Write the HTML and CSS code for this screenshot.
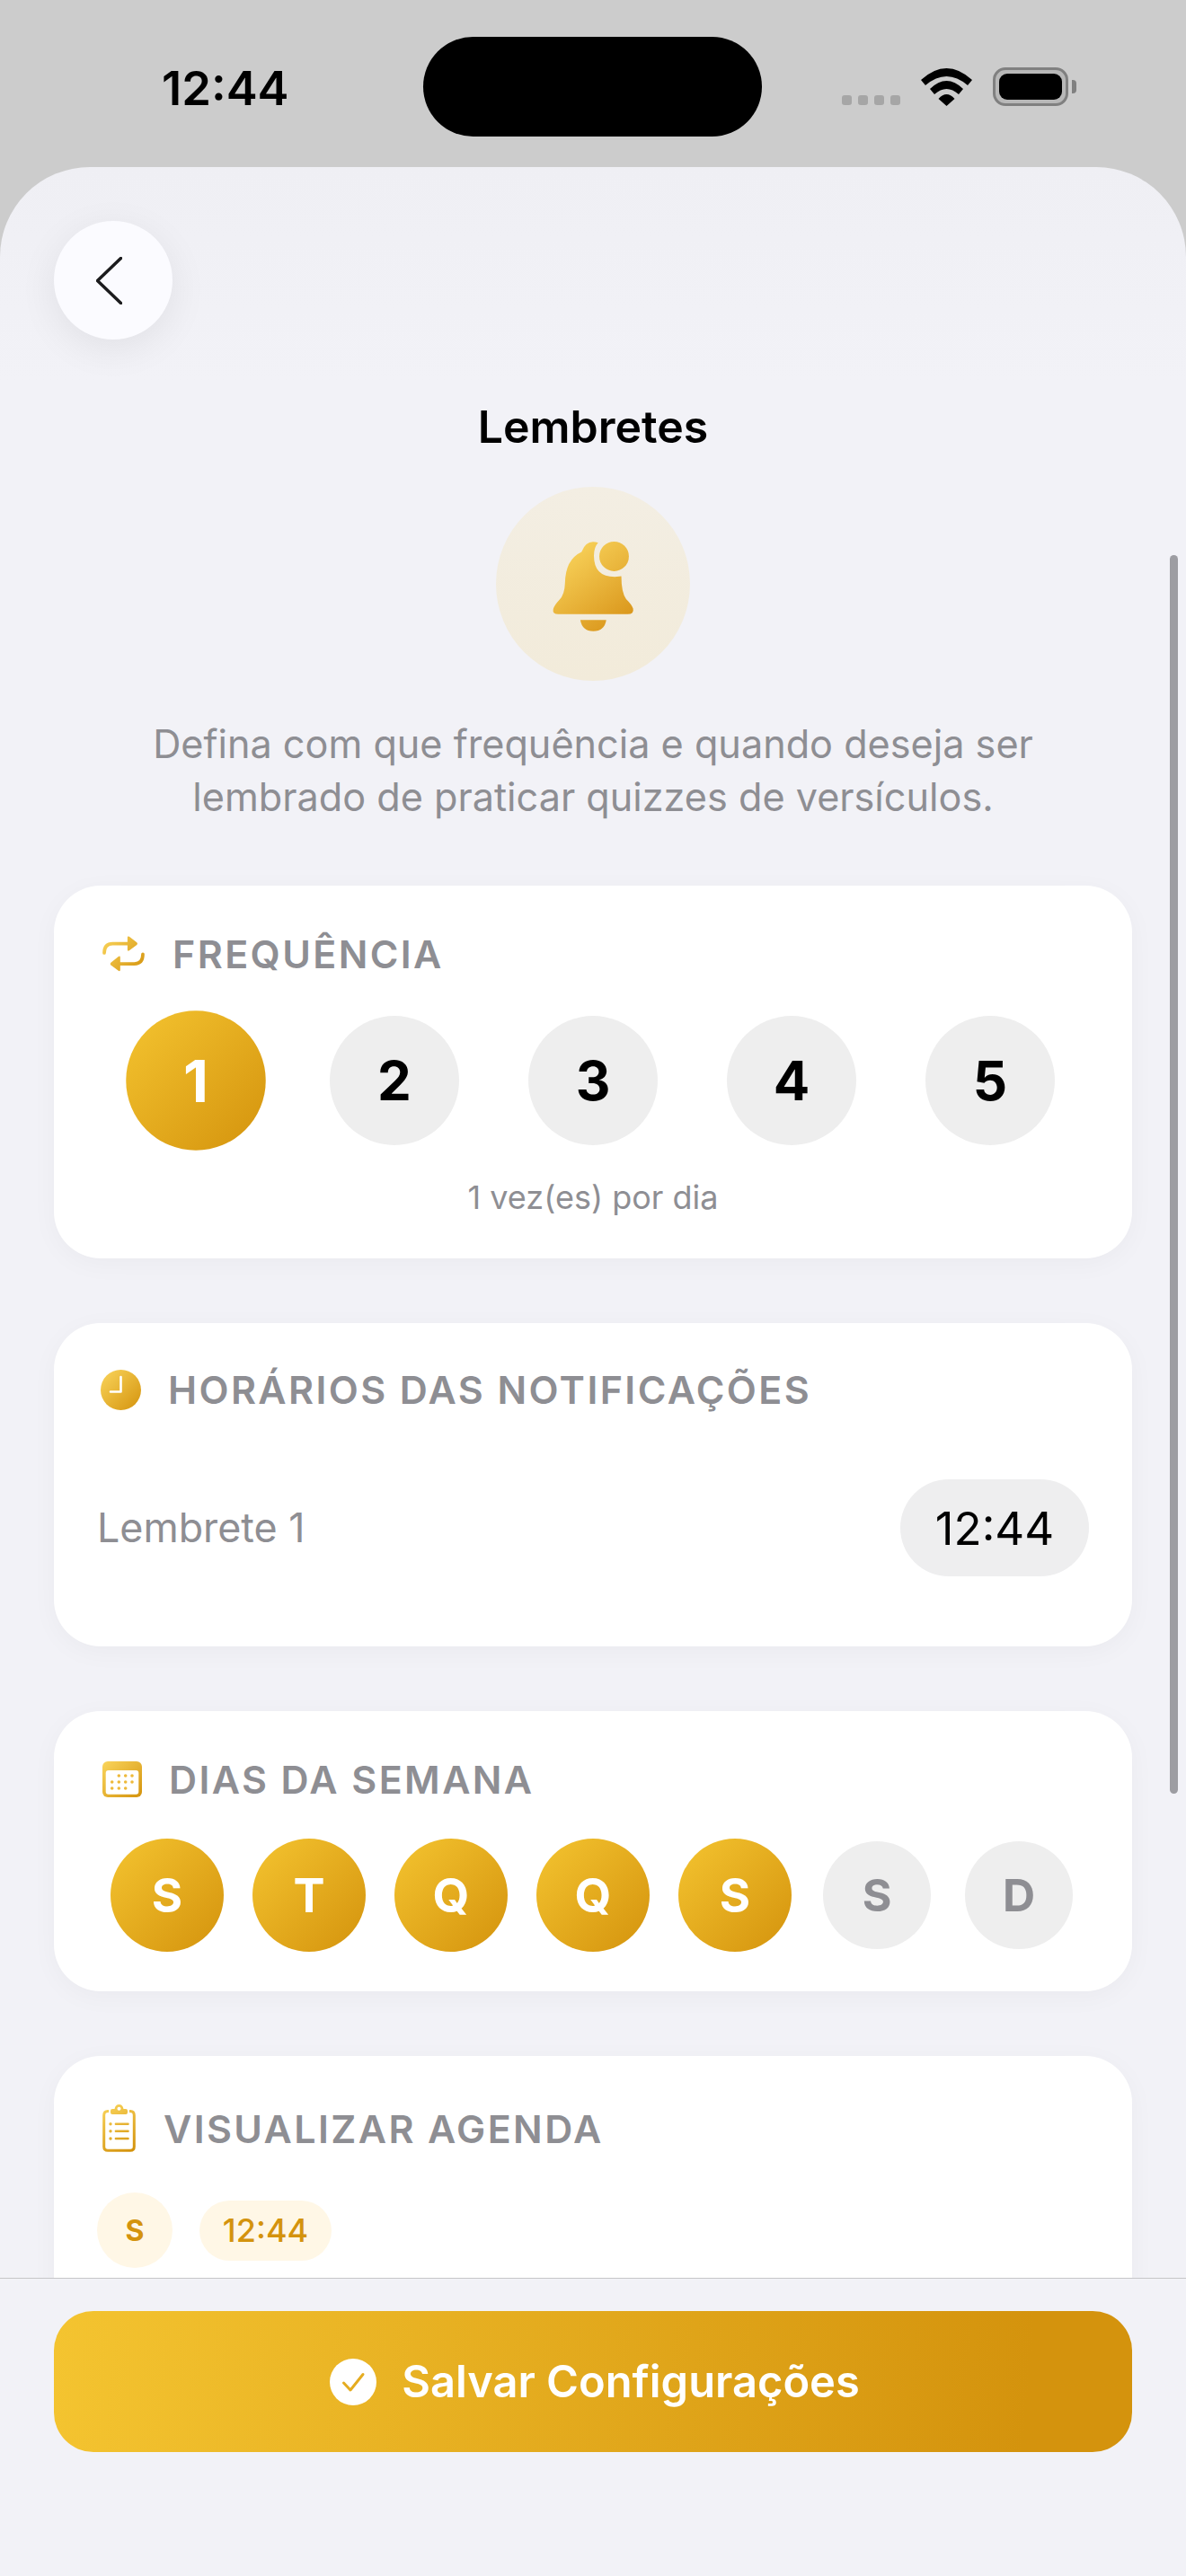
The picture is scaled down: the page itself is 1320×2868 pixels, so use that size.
FILE: index.html
```html
<!DOCTYPE html>
<html lang="pt-BR">
<head>
    <meta charset="UTF-8">
    <meta name="viewport" content="width=device-width, initial-scale=1.0">
    <title>Lembretes</title>
    <link rel="stylesheet" href="styles.css">
</head>
<body>
    <svg class="defs" width="0" height="0">
        <defs>
            <linearGradient id="gold" x1="0" y1="0" x2="1" y2="1">
                <stop offset="0" stop-color="#fad55c"/>
                <stop offset="1" stop-color="#d4930d"/>
            </linearGradient>
            <linearGradient id="goldBell" gradientUnits="userSpaceOnUse" x1="450" y1="340" x2="640" y2="590">
                <stop offset="0" stop-color="#f8d25a"/>
                <stop offset="1" stop-color="#d9951a"/>
            </linearGradient>
            <linearGradient id="goldRepeat" gradientUnits="userSpaceOnUse" x1="222" y1="185" x2="362" y2="303">
                <stop offset="0" stop-color="#fad55c"/>
                <stop offset="1" stop-color="#d4930d"/>
            </linearGradient>
            <linearGradient id="goldClip" gradientUnits="userSpaceOnUse" x1="0" y1="0" x2="30" y2="53">
                <stop offset="0" stop-color="#fad55c"/>
                <stop offset="1" stop-color="#d4930d"/>
            </linearGradient>
        </defs>
    </svg>

    <div class="status-bar">
        <span class="clock">12:44</span>
        <div class="island"></div>
        <div class="status-icons">
            <div class="signal"><i></i><i></i><i></i><i></i></div>
            <svg class="wifi" width="57" height="42" viewBox="0 0 57 42">
                <path d="M0 13Q28.5 -13 57 13L52 19Q28.5 -1 5 19Z"/>
                <path d="M10 23Q28.5 5 47 23L42 29Q28.5 17 15 29Z"/>
                <path d="M19.5 34Q28.5 24 37.5 34L28.5 42Z"/>
            </svg>
            <div class="battery"><div class="battery-fill"></div></div>
            <div class="battery-nub"></div>
        </div>
    </div>

    <div class="sheet">
        <div class="back-btn">
            <svg width="29" height="53" viewBox="0 0 29 53">
                <path d="M27.5 1.5L1.5 26.5L27.5 51.5" fill="none" stroke="#1c1c1e" stroke-width="3.5" stroke-linecap="round" stroke-linejoin="round"/>
            </svg>
        </div>
        <div class="scrollbar"></div>

        <div class="scroll">
            <h1 class="title">Lembretes</h1>
            <div class="hero-icon">
                <svg width="94" height="104" viewBox="400 305 280 310">
                    <path fill="url(#goldBell)" d="M425 552Q405 552 408 535Q412 522 428 505Q446 486 447 450Q448 370 502 345Q515 312 540 312Q549 312 557 315Q543 330 543 358Q543 428 612 428L634 426Q634 480 650 502Q668 520 673 533Q677 552 655 552Z"/>
                    <path fill="url(#goldBell)" d="M498 571H584Q578 608 541 608Q504 608 498 571Z"/>
                    <circle fill="url(#goldBell)" cx="610" cy="360" r="49"/>
                </svg>
            </div>
            <p class="intro">Defina com que frequência e quando deseja ser lembrado de praticar quizzes de versículos.</p>

            <section class="card card-freq">
                <div class="card-head">
                    <svg class="head-icon" width="47" height="40" viewBox="222 185 140 118">
                        <g fill="none" stroke="url(#goldRepeat)" stroke-width="11" stroke-linecap="round">
                            <path d="M228 241Q228 210 256 210H315"/>
                            <path d="M356 245Q356 277 328 277H270"/>
                        </g>
                        <path fill="url(#goldRepeat)" d="M305 190Q305 183 311 187L336 206Q340 210 336 214L311 233Q305 237 305 230Z"/>
                        <path fill="url(#goldRepeat)" d="M281 256Q281 249 275 253L250 273Q246 277 250 281L275 300Q281 304 281 297Z"/>
                    </svg>
                    <h2>FREQUÊNCIA</h2>
                </div>
                <div class="freq-row">
                    <div class="freq on">1</div>
                    <div class="freq">2</div>
                    <div class="freq">3</div>
                    <div class="freq">4</div>
                    <div class="freq">5</div>
                </div>
                <p class="freq-note">1 vez(es) por dia</p>
            </section>

            <section class="card card-times">
                <div class="card-head">
                    <svg class="head-icon" width="45" height="45" viewBox="0 0 45 45">
                        <circle cx="22.5" cy="22.5" r="22.5" fill="url(#gold)"/>
                        <path d="M22.5 8V24.5H11" fill="none" stroke="#fff" stroke-width="2.6" stroke-linecap="round" stroke-linejoin="round"/>
                    </svg>
                    <h2>HORÁRIOS DAS NOTIFICAÇÕES</h2>
                </div>
                <div class="time-row">
                    <span class="time-label">Lembrete 1</span>
                    <span class="time-pill">12:44</span>
                </div>
            </section>

            <section class="card card-days">
                <div class="card-head">
                    <svg class="head-icon" width="44" height="40" viewBox="0 0 44 40">
                        <rect width="44" height="40" rx="6" fill="url(#gold)"/>
                        <rect x="3.7" y="10" width="36.6" height="26.7" rx="3" fill="#fff"/>
                        <g fill="#eeb93a">
                            <circle cx="18.3" cy="16" r="1.8"/><circle cx="25.7" cy="16" r="1.8"/><circle cx="33" cy="16" r="1.8"/>
                            <circle cx="10.7" cy="23" r="1.8"/><circle cx="18.3" cy="23" r="1.8"/><circle cx="25.7" cy="23" r="1.8"/><circle cx="33" cy="23" r="1.8"/>
                            <circle cx="10.7" cy="30" r="1.8"/><circle cx="18.3" cy="30" r="1.8"/><circle cx="25.7" cy="30" r="1.8"/>
                        </g>
                    </svg>
                    <h2>DIAS DA SEMANA</h2>
                </div>
                <div class="day-row">
                    <div class="day on">S</div>
                    <div class="day on">T</div>
                    <div class="day on">Q</div>
                    <div class="day on">Q</div>
                    <div class="day on">S</div>
                    <div class="day">S</div>
                    <div class="day">D</div>
                </div>
            </section>

            <section class="card card-agenda">
                <div class="card-head">
                    <svg class="head-icon" width="37" height="53" viewBox="0 0 37 53">
                        <path d="M7 7.5H6Q1.7 7.5 1.7 12V47Q1.7 51.3 6 51.3H31Q35.3 51.3 35.3 47V12Q35.3 7.5 31 7.5H30" fill="none" stroke="url(#goldClip)" stroke-width="3"/>
                        <path fill="url(#goldClip)" fill-rule="evenodd" d="M11 5H13.5Q14.5 0 18.5 0T23.5 5H26Q28 5 28 7V9Q28 11 26 11H11Q9 11 9 9V7Q9 5 11 5ZM18.5 2.8a2 2 0 1 0 .01 0Z"/>
                        <g fill="url(#goldClip)">
                            <circle cx="9" cy="21.7" r="1.7"/><circle cx="9" cy="29.7" r="1.7"/><circle cx="9" cy="38" r="1.7"/>
                            <rect x="13.7" y="20.5" width="16" height="2.4" rx="1"/>
                            <rect x="13.7" y="28.5" width="16" height="2.4" rx="1"/>
                            <rect x="13.7" y="36.8" width="16" height="2.4" rx="1"/>
                        </g>
                    </svg>
                    <h2>VISUALIZAR AGENDA</h2>
                </div>
                <div class="agenda-row">
                    <div class="agenda-day">S</div>
                    <div class="agenda-time">12:44</div>
                </div>
            </section>
        </div>

        <div class="footer">
            <div class="save-btn">
                <svg width="52" height="52" viewBox="0 0 52 52">
                    <circle cx="26" cy="26" r="26" fill="#fff"/>
                    <path d="M15.5 27L23 35L37 17.5" fill="none" stroke="#e5ac20" stroke-width="3" stroke-linecap="round" stroke-linejoin="round"/>
                </svg>
                <span>Salvar Configurações</span>
            </div>
        </div>
    </div>
</body>
</html>
```

FILE: styles.css
```css
* {
    box-sizing: border-box;
}
html, body {
    margin: 0;
    height: 100%;
}
body {
    width: 1320px;
    height: 2868px;
    overflow: hidden;
    display: flex;
    flex-direction: column;
    background: #cccccc;
    font-family: Inter, "Liberation Sans", sans-serif;
    color: #000;
}
.defs {
    position: absolute;
}

/* status bar */
.status-bar {
    height: 186px;
    flex: none;
    display: flex;
    align-items: flex-start;
}
.clock {
    width: 139px;
    margin: 69px 0 0 180px;
    font-size: 52.5px;
    line-height: 58px;
    font-weight: 600;
    white-space: nowrap;
}
.island {
    width: 377px;
    height: 111px;
    margin: 41px 0 0 152px;
    border-radius: 56px;
    background: #000;
}
.status-icons {
    display: flex;
    align-items: flex-end;
    margin: 75px 0 0 89px;
}
.signal {
    display: flex;
    gap: 7px;
    margin-bottom: 1px;
}
.signal i {
    width: 11px;
    height: 11px;
    border-radius: 3px;
    background: #a6a6a6;
}
.wifi {
    margin-left: 23px;
    fill: #000;
}
.battery {
    width: 84px;
    height: 43px;
    margin-left: 23px;
    padding: 4px;
    border: 3px solid #808080;
    border-radius: 14px;
    background: #b8b8b8;
}
.battery-fill {
    height: 100%;
    border-radius: 9px;
    background: #000;
}
.battery-nub {
    width: 5px;
    height: 15px;
    margin: 0 0 14px 4px;
    border-radius: 0 4px 4px 0;
    background: #808080;
}

/* sheet */
.sheet {
    flex: 1;
    min-height: 0;
    position: relative;
    display: flex;
    flex-direction: column;
    border-radius: 100px 100px 0 0;
    background: linear-gradient(#efeff4, #f2f2f7 240px);
    overflow: hidden;
}
.back-btn {
    position: absolute;
    top: 60px;
    left: 60px;
    z-index: 2;
    width: 132px;
    height: 132px;
    display: flex;
    align-items: center;
    justify-content: center;
    padding-right: 9px;
    border-radius: 50%;
    background: #fbfbff;
    box-shadow: 0 10px 44px rgba(0, 0, 0, 0.07);
}
.scrollbar {
    position: absolute;
    top: 432px;
    right: 9px;
    width: 9px;
    height: 1379px;
    border-radius: 5px;
    background: #9d9da2;
}
.scroll {
    flex: 1;
    min-height: 0;
    overflow: hidden;
    padding: 258px 60px 0;
}
.title {
    margin: 0;
    text-align: center;
    font-size: 50px;
    line-height: 62px;
    font-weight: 600;
}
.hero-icon {
    width: 216px;
    height: 216px;
    margin: 36px auto 0;
    display: flex;
    align-items: center;
    justify-content: center;
    padding-top: 6px;
    border-radius: 50%;
    background: linear-gradient(#f3eee3, #f2ebda);
}
.intro {
    width: 1040px;
    margin: 41px auto 0;
    text-align: center;
    font-size: 43.2px;
    line-height: 59px;
    color: #8e8e93;
}

/* cards */
.card {
    margin-top: 72px;
    padding: 0 48px;
    border-radius: 52px;
    background: #fff;
    box-shadow: 0 6px 30px rgba(0, 0, 0, 0.035);
}
.card-freq {
    height: 415px;
    margin-top: 69px;
    padding-top: 50px;
}
.card-head {
    display: flex;
    align-items: center;
    gap: 30px;
}
.card-head h2 {
    margin: 0;
    font-size: 43px;
    line-height: 52px;
    font-weight: 600;
    letter-spacing: 2.4px;
    color: #8e8e93;
    white-space: nowrap;
}
.card-freq .card-head {
    padding-left: 6px;
    gap: 31px;
}
.freq-row {
    display: flex;
    justify-content: center;
    gap: 77px;
    margin-top: 43px;
}
.freq {
    width: 144px;
    height: 144px;
    display: flex;
    align-items: center;
    justify-content: center;
    border-radius: 50%;
    background: #eeeeee;
    font-size: 60px;
    font-weight: 700;
}
.freq.on {
    transform: scale(1.08);
    background: linear-gradient(135deg, #f4c430, #d4930d);
    color: #fff;
}
.freq-note {
    margin: 36px 0 0;
    text-align: center;
    font-size: 36px;
    line-height: 44px;
    color: #8e8e93;
}
.card-times {
    height: 360px;
    padding-top: 48px;
}
.card-times .card-head {
    padding-left: 4px;
}
.time-row {
    display: flex;
    align-items: center;
    justify-content: space-between;
    margin-top: 74px;
}
.time-label {
    font-size: 44.8px;
    color: #8e8e93;
}
.time-pill {
    width: 210px;
    height: 108px;
    display: flex;
    align-items: center;
    justify-content: center;
    border-radius: 54px;
    background: #eeeeef;
    font-size: 51px;
}
.card-days {
    height: 312px;
    padding-top: 50px;
}
.card-days .card-head {
    padding-left: 6px;
}
.day-row {
    display: flex;
    justify-content: center;
    gap: 38px;
    margin-top: 43px;
}
.day {
    width: 120px;
    height: 120px;
    display: flex;
    align-items: center;
    justify-content: center;
    border-radius: 50%;
    background: #eeeeee;
    font-size: 50px;
    font-weight: 700;
    color: #8e8e93;
}
.day.on {
    transform: scale(1.05);
    background: linear-gradient(135deg, #f4c430, #d4930d);
    color: #fff;
}
.card-agenda {
    height: 400px;
    padding-top: 54px;
}
.card-agenda .card-head {
    padding-left: 6px;
    gap: 31px;
}
.agenda-row {
    display: flex;
    align-items: center;
    gap: 30px;
    margin-top: 45px;
}
.agenda-day {
    width: 84px;
    height: 84px;
    display: flex;
    align-items: center;
    justify-content: center;
    border-radius: 50%;
    background: #fff7e6;
    font-size: 32px;
    font-weight: 700;
    color: #d4930d;
}
.agenda-time {
    width: 147px;
    height: 67px;
    display: flex;
    align-items: center;
    justify-content: center;
    border-radius: 34px;
    background: #fff7e6;
    font-size: 36px;
    font-weight: 500;
    color: #d4930d;
}

/* footer */
.footer {
    flex: none;
    height: 332px;
    padding: 36px 60px 0;
    border-top: 1px solid #c6c6c8;
    background: #f2f2f7;
}
.save-btn {
    height: 157px;
    display: flex;
    align-items: center;
    justify-content: center;
    gap: 28px;
    padding-left: 4px;
    border-radius: 44px;
    background: linear-gradient(95deg, #f4c430, #d4930d 90%);
    color: #fff;
    font-size: 48.8px;
    font-weight: 600;
}
```
